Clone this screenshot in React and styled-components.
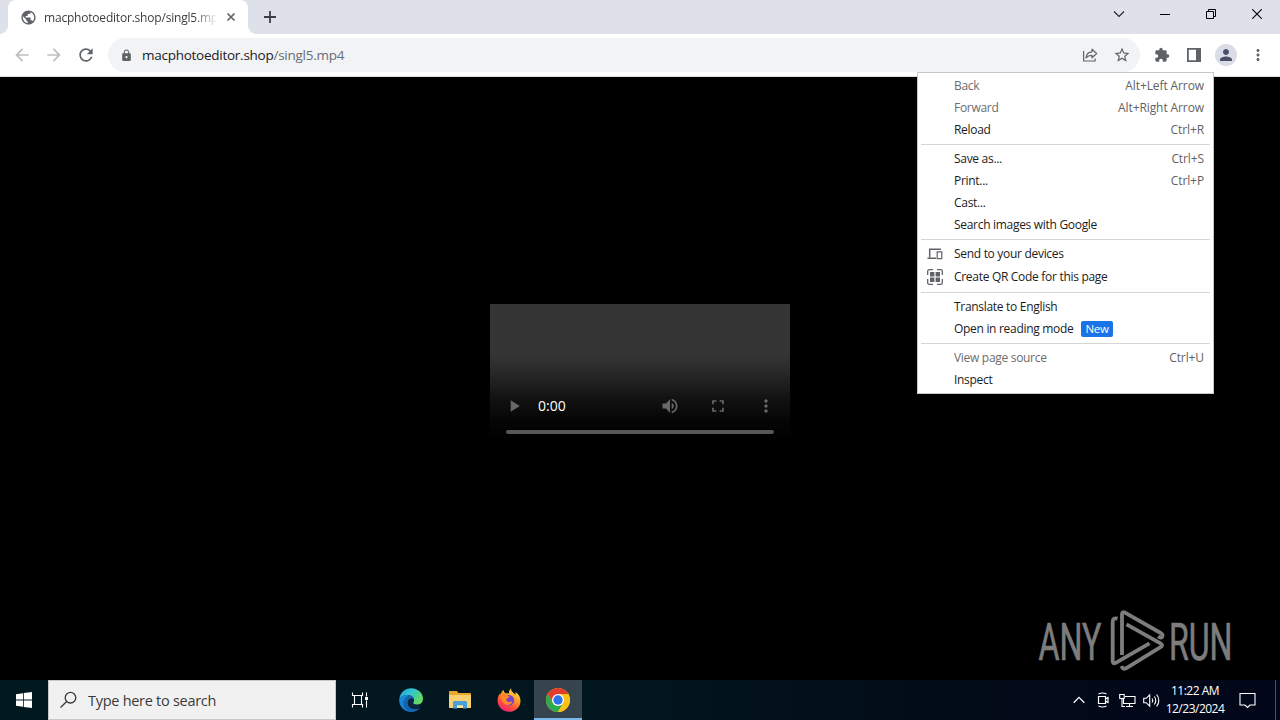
import styled, { createGlobalStyle, css } from 'styled-components';
import {
  MdArrowBack,
  MdArrowForward,
  MdExtension,
  MdFullscreen,
  MdLock,
  MdMoreVert,
  MdPerson,
  MdPlayArrow,
  MdPublic,
  MdRefresh,
  MdStarBorder,
  MdVolumeUp,
} from 'react-icons/md';

const GlobalStyle = createGlobalStyle`
  * {
    box-sizing: border-box;
  }

  body {
    margin: 0;
    overflow: hidden;
    background: #000;
    font-family: 'Open Sans', 'Noto Sans', sans-serif;
  }

  svg {
    display: block;
    flex: none;
  }
`;

const Desktop = styled.div`
  position: relative;
  display: flex;
  flex-direction: column;
  width: 1280px;
  height: 720px;
  overflow: hidden;
`;

const TabStrip = styled.div`
  display: flex;
  height: 34px;
  padding-left: 8px;
  background: #dee1e9;
`;

const Tab = styled.div`
  position: relative;
  display: flex;
  align-items: center;
  width: 240px;
  padding: 0 8px 0 12px;
  background: #fff;
  border-radius: 8px 8px 0 0;
  color: #5f6368;

  &::before,
  &::after {
    content: '';
    position: absolute;
    bottom: 0;
    width: 8px;
    height: 8px;
  }

  &::before {
    left: -8px;
    background: radial-gradient(circle at 0 0, transparent 7.5px, #fff 8px);
  }

  &::after {
    right: -8px;
    background: radial-gradient(circle at 100% 0, transparent 7.5px, #fff 8px);
  }
`;

const TabTitle = styled.div`
  width: 172px;
  margin: 0 8px 0 7px;
  overflow: hidden;
  color: #3c4043;
  font-size: 12px;
  letter-spacing: -0.2px;
  white-space: nowrap;
  mask-image: linear-gradient(90deg, #000 150px, transparent 174px);
`;

const IconCell = styled.div`
  display: flex;
  align-items: center;
  justify-content: center;
  flex: none;
  width: ${({ $width = 32 }) => $width}px;
  color: ${({ $color = '#5f6368' }) => $color};
`;

const WindowButtons = styled.div`
  display: flex;
  height: 28px;
  margin-left: auto;
`;

const Toolbar = styled.div`
  display: flex;
  align-items: stretch;
  height: 43px;
  padding: 0 6px;
  background: #fff;
  border-bottom: 1px solid #dcdee0;
`;

const AddressBar = styled.div`
  display: flex;
  align-items: center;
  width: 1032px;
  height: 34px;
  margin: 4px 6px 0 6px;
  padding: 0 2px 0 10px;
  background: #f1f3f4;
  border-radius: 17px;
`;

const Url = styled.div`
  flex: 1;
  padding: 0 0 1px 8px;
  color: #6a6e73;
  font-size: 13.5px;
  letter-spacing: -0.26px;
  white-space: nowrap;

  b {
    color: #202124;
    font-weight: 400;
  }
`;

const Avatar = styled.div`
  display: flex;
  align-items: center;
  justify-content: center;
  width: 22px;
  height: 22px;
  border-radius: 50%;
  background: #dadce8;
  color: #4a5068;
`;

const Page = styled.main`
  display: flex;
  align-items: center;
  justify-content: center;
  flex: 1;
  background: #000;
`;

const Video = styled.div`
  display: flex;
  flex-direction: column;
  justify-content: flex-end;
  width: 300px;
  height: 150px;
  margin-bottom: -1px;
  padding: 0 0 20px;
  background: linear-gradient(#353535 0, #353535 46px, #303030 58px, #222 76px, #111 96px, #060606 116px, #000 136px);
`;

const Controls = styled.div`
  display: flex;
  align-items: center;
  height: 32px;
  margin-bottom: 8px;
  color: #686868;
`;

const Time = styled.div`
  flex: 1;
  padding-bottom: 2px;
  color: #fff;
  font-size: 14px;
`;

const Timeline = styled.div`
  height: 4px;
  margin: 0 16px;
  border-radius: 2px;
  background: #575757;
`;

const Menu = styled.div`
  position: absolute;
  top: 72px;
  left: 917px;
  width: 297px;
  padding: 2px 0;
  background: #fff;
  border: 1px solid #c6c6c6;
`;

const Item = styled.div`
  display: flex;
  align-items: center;
  height: ${({ $tall }) => ($tall ? 24 : 22)}px;
  padding: 0 9px 2px 0;
  color: ${({ $disabled }) => ($disabled ? '#6d6d6d' : '#1c1c1c')};
  font-size: 12px;
  letter-spacing: -0.3px;
  white-space: nowrap;
`;

const ItemIcon = styled.div`
  display: flex;
  justify-content: center;
  width: 36px;
  padding: 2px 2px 0 0;
  color: #5f6368;
`;

const Shortcut = styled.span`
  margin-left: auto;
  color: #626262;
  letter-spacing: -0.1px;
`;

const Badge = styled.span`
  height: 16px;
  margin: 2px 0 0 8px;
  padding: 0 4px;
  border-radius: 2px;
  background: #1a73e8;
  color: #fff;
  font-size: 11.5px;
  line-height: 15px;
`;

const Separator = styled.div`
  height: 1px;
  margin: 3px;
  background: #d5d5d5;
`;

const Watermark = styled.div`
  position: absolute;
  top: 604px;
  left: 1030px;
`;

const Taskbar = styled.footer`
  display: flex;
  height: 40px;
  background: linear-gradient(90deg, #021821 0, #02161f 600px, #020b18 950px, #02061a 1280px);
`;

const Search = styled.div`
  display: flex;
  align-items: center;
  width: 288px;
  padding-left: 10px;
  background: #f1f1f1;
  border: 1px solid #c3c8ca;
  color: #3a3a3a;
  font-size: 14.5px;
  letter-spacing: -0.28px;

  span {
    margin-left: 10px;
  }
`;

const TaskButton = styled.div`
  display: flex;
  align-items: center;
  justify-content: center;
  width: 48px;
  ${({ $active }) =>
    $active &&
    css`
      background: #36454d;
      border-bottom: 2px solid #76b9ed;
      padding-top: 2px;
    `}
`;

const PinnedApps = styled.div`
  display: flex;
  gap: 1px;
  margin-left: 3px;
`;

const Tray = styled.div`
  display: flex;
  margin-left: auto;
  color: #fff;
`;

const Clock = styled.div`
  display: flex;
  flex-direction: column;
  align-items: center;
  width: 64px;
  padding-top: 2px;
  font-size: 12px;
  line-height: 18px;
  letter-spacing: -0.5px;
  white-space: nowrap;
`;

const ShowDesktop = styled.div`
  width: 5px;
  border-left: 1px solid #4a5361;
`;

const Line = styled.svg`
  fill: none;
  stroke: currentColor;
  stroke-width: ${({ $stroke = 1 }) => $stroke};
`;

const SendIcon = () => (
  <Line width="16" height="12" viewBox="0 0 16 12" $stroke={1.5}>
    <path d="M14 1.200H2.700v8M0.500 10.200h8.500" />
    <path d="M10.200 3.800h4.600v6.900h-4.600z" strokeWidth="1.2" />
  </Line>
);

const QrIcon = () => (
  <Line width="16" height="16" viewBox="0 0 16 16" $stroke={1.3}>
    <path d="M.7 6V2.300Q.7.7 2.300.7H6M10 .7h3.700q1.600 0 1.600 1.600V6M15.300 10v3.700q0 1.600-1.600 1.600H10M6 15.300H2.300Q.7 15.300.7 13.700V10" />
    <path
      d="M3 3h4.400v4.400H3zM8.600 3H13v4.400H8.600zM3 8.600h4.400V13H3zM8.600 8.600H13V13H8.600z"
      fill="currentColor"
      stroke="none"
    />
  </Line>
);

const EdgeIcon = () => (
  <svg width="24" height="24" viewBox="0 0 24 24">
    <defs>
      <linearGradient id="edgeTop" x1="0" y1="0" x2="1" y2=".5">
        <stop offset="0" stopColor="#249fe0" />
        <stop offset=".5" stopColor="#2fc5cf" />
        <stop offset="1" stopColor="#67d860" />
      </linearGradient>
      <linearGradient id="edgeBase" x1="0" y1="0" x2="1" y2="1">
        <stop offset="0" stopColor="#1a91df" />
        <stop offset="1" stopColor="#1461b3" />
      </linearGradient>
    </defs>
    <path d="M.3 11C1 4.600 6 .2 12.200.2 19.300.2 24 5.300 24 10.700c0 3.800-2.700 6-6 6-2.500 0-4-.9-4-1.700 0-.6 1-1 1-3 0-2.600-2.500-5-6.300-5C4.700 7 1.500 9 .3 11z" fill="url(#edgeTop)" />
    <path d="M.2 11.600C1.500 8.600 4.700 7 8.300 7.100c3.600.1 6.500 2.200 6.700 4.600-.5-.8-1.500-1.200-2.600-1.200-2.300 0-3.700 2-3.700 4.300 0 3.800 3.600 6.400 7.800 6.200 1.900-.1 3.800-.8 5-1.700-2 3-5.600 4.700-9.400 4.700C5 24-.2 18.200.2 11.600z" fill="url(#edgeBase)" />
    <path d="M4.500 15c0-4 2.600-7.200 6.300-7.500 2.300.4 4 2.200 4.200 4.200-.5-.8-1.500-1.200-2.600-1.200-2.300 0-3.700 2-3.700 4.300 0 3.800 3.600 6.400 7.800 6.200-1.500 1.300-3 1.900-5 1.800-4-.3-7-3.800-7-7.800z" fill="#135aa0" opacity=".7" />
    <path d="M12.400 10.500c1.500 0 2.700.9 2.600 2-.1 1.200-1 1.800-1 2.500 0 .8 1.500 1.700 4 1.700 1.300 0 2.500-.3 3.500-.9l.2.900c0 2-1.900 3.900-5.200 4.300-4.200.2-7.800-2.400-7.800-6.200 0-2.300 1.400-4.300 3.700-4.300z" fill="#0a2540" />
  </svg>
);

const FolderIcon = () => (
  <svg width="22" height="20" viewBox="0 0 22 20">
    <path d="M0 1.500Q0 1 .8 1h7l1.700 2H21q1 0 1 1v14H0z" fill="#eaa82f" />
    <path d="M0 5h22v12.500q0 .5-.6.5H.6Q0 18 0 17.500z" fill="#f9d173" />
    <path d="M4 18.500V12.500q0-1.500 1.500-1.500h11q1.500 0 1.500 1.500v6h-4V15.500H8v3z" fill="#4a9fd8" />
    <path d="M8 15.500h6V18H8z" fill="#f7e5a8" />
  </svg>
);

const FirefoxIcon = () => (
  <svg width="24" height="24" viewBox="0 0 24 24">
    <defs>
      <linearGradient id="fox" x1=".8" y1="0" x2=".25" y2="1">
        <stop offset="0" stopColor="#fff04a" />
        <stop offset=".4" stopColor="#ff9a22" />
        <stop offset=".7" stopColor="#ff4b3c" />
        <stop offset="1" stopColor="#e9207c" />
      </linearGradient>
    </defs>
    <path d="M14.300.2c-.5 2 .3 3 1.800 4.200 1 .8 1.800 1.500 2.300 2.300.4-1 .2-2-.2-3 3.300 1.900 5.500 5.500 5.300 9.500-.2 6-5 10.600-11.300 10.600S.8 19 .6 13c-.1-3 .8-5.700 2.600-7.700 0 .6.2 1.100.4 1.500C4 4.800 5 3 6.600 1.800c0 1.500.6 2.800 1.900 3.500 1.300-.2 2.500 0 3.500.3C11.700 3.500 12.500 1.500 14.300.2z" fill="url(#fox)" />
    <circle cx="12" cy="12.300" r="5.200" fill="#7542d2" />
    <path d="M3.500 7c1.500-1.800 4-2.200 5.500-1 .3 1.200 1.400 2 3.600 2.200-.2 1.300-2 1.700-2.900 2.600-.8.900-.2 2.900 1.800 3.200 1.800.3 2.500-1 4-.5-1.300 3.300-5.200 4.300-7.900 2.500C5 14.200 4.500 10 3.500 7z" fill="#ff8a25" />
  </svg>
);

const ChromeIcon = () => (
  <svg width="24" height="24" viewBox="0 0 24 24">
    <circle cx="12" cy="12" r="12" fill="#fbc116" />
    <path d="M12 6h10.390A12 12 0 0 0 1.610 6L7 15z" fill="#e33b2e" />
    <path d="M1.610 6A12 12 0 0 0 12 24l5.200-9L12 17.500 6.800 15z" fill="#2da94f" />
    <path d="M12 6h10.390A12 12 0 0 1 12 24l5.200-9z" fill="#fbc116" />
    <circle cx="12" cy="12" r="6" fill="#fff" />
    <circle cx="12" cy="12" r="4.700" fill="#2c74e8" />
  </svg>
);

const menuItems = [
  { label: 'Back', shortcut: 'Alt+Left Arrow', disabled: true },
  { label: 'Forward', shortcut: 'Alt+Right Arrow', disabled: true },
  { label: 'Reload', shortcut: 'Ctrl+R' },
  null,
  { label: 'Save as...', shortcut: 'Ctrl+S' },
  { label: 'Print...', shortcut: 'Ctrl+P' },
  { label: 'Cast...' },
  { label: 'Search images with Google' },
  null,
  { label: 'Send to your devices', icon: <SendIcon /> },
  { label: 'Create QR Code for this page', icon: <QrIcon />, tall: true },
  null,
  { label: 'Translate to English' },
  { label: 'Open in reading mode', badge: 'New' },
  null,
  { label: 'View page source', shortcut: 'Ctrl+U', disabled: true },
  { label: 'Inspect' },
];

const ContextMenu = () => (
  <Menu>
    {menuItems.map((item, index) =>
      item ? (
        <Item key={item.label} $disabled={item.disabled} $tall={item.tall}>
          <ItemIcon>{item.icon}</ItemIcon>
          {item.label}
          {item.badge && <Badge>{item.badge}</Badge>}
          {item.shortcut && <Shortcut>{item.shortcut}</Shortcut>}
        </Item>
      ) : (
        <Separator key={`separator_${index}`} />
      ),
    )}
  </Menu>
);

const BrowserTabs = () => (
  <TabStrip>
    <Tab>
      <MdPublic size={17} />
      <TabTitle>macphotoeditor.shop/singl5.mp4</TabTitle>
      <Line width="14" height="14" viewBox="0 0 14 14" $stroke={1.7}>
        <path d="M3.500 3.500l7 7M10.500 3.500l-7 7" />
      </Line>
    </Tab>
    <IconCell $width={44} $color="#3c4043">
      <Line width="12" height="12" viewBox="0 0 12 12" $stroke={1.8}>
        <path d="M6 0v12M0 6h12" />
      </Line>
    </IconCell>
    <WindowButtons>
      <IconCell $width={46} $color="#222">
        <Line width="12" height="8" viewBox="0 0 12 8" $stroke={1.1}>
          <path d="M1 1.500l5 5 5-5" />
        </Line>
      </IconCell>
      <IconCell $width={46} $color="#000">
        <Line width="10" height="11" viewBox="0 0 10 11">
          <path d="M0 5.500h10" />
        </Line>
      </IconCell>
      <IconCell $width={46} $color="#000">
        <Line width="10" height="10" viewBox="0 0 10 10">
          <path d="M.5 2.500h7v7h-7zM2.500 2.500v-2h7v7h-2" />
        </Line>
      </IconCell>
      <IconCell $width={46} $color="#000">
        <Line width="10" height="10" viewBox="0 0 10 10" $stroke={1.1}>
          <path d="M.2.2l9.600 9.600M9.800.2L.2 9.800" />
        </Line>
      </IconCell>
    </WindowButtons>
  </TabStrip>
);

const BrowserToolbar = () => (
  <Toolbar>
    <IconCell $color="#bcbec1">
      <MdArrowBack size={20} />
    </IconCell>
    <IconCell $color="#bcbec1">
      <MdArrowForward size={20} />
    </IconCell>
    <IconCell>
      <MdRefresh size={20} />
    </IconCell>
    <AddressBar>
      <IconCell $width={16}>
        <MdLock size={13} />
      </IconCell>
      <Url>
        <b>macphotoeditor.shop</b>/singl5.mp4
      </Url>
      <IconCell>
        <Line width="16" height="16" viewBox="0 0 16 16" $stroke={1.2}>
          <path d="M1.600 4v10h11.500v-2.500" />
          <path d="M4 11c.4-4 2.500-6 6-6.200V2.200l4.600 4.300L10 10.800V8.300C7.300 8.300 5.500 9 4 11z" strokeLinejoin="round" />
        </Line>
      </IconCell>
      <IconCell>
        <MdStarBorder size={18} />
      </IconCell>
    </AddressBar>
    <IconCell>
      <MdExtension size={16} />
    </IconCell>
    <IconCell>
      <Line width="14" height="14" viewBox="0 0 14 14" $stroke={1.8}>
        <path d="M.9.9h12.200v12.200H.9z" />
        <path d="M9 1h4v12H9z" fill="currentColor" stroke="none" />
      </Line>
    </IconCell>
    <IconCell>
      <Avatar>
        <MdPerson size={18} />
      </Avatar>
    </IconCell>
    <IconCell>
      <MdMoreVert size={18} />
    </IconCell>
  </Toolbar>
);

const VideoPlayer = () => (
  <Video>
    <Controls>
      <IconCell $width={48} $color="inherit">
        <MdPlayArrow size={20} />
      </IconCell>
      <Time>0:00</Time>
      <IconCell $width={48} $color="inherit">
        <MdVolumeUp size={20} />
      </IconCell>
      <IconCell $width={48} $color="inherit">
        <MdFullscreen size={20} />
      </IconCell>
      <IconCell $width={48} $color="inherit">
        <MdMoreVert size={20} />
      </IconCell>
    </Controls>
    <Timeline />
  </Video>
);

const AnyRunLogo = () => (
  <Watermark>
    <svg width="220" height="74" viewBox="0 0 220 74" fill="#7d7d7d">
      <g fontFamily="Roboto, sans-serif" fontSize="52.500" stroke="#7d7d7d" strokeWidth=".7">
        <text x="8.500" y="55.500" textLength="63" lengthAdjust="spacingAndGlyphs">
          ANY
        </text>
        <text x="139" y="55.500" textLength="63.500" lengthAdjust="spacingAndGlyphs">
          RUN
        </text>
      </g>
      <g fill="none" stroke="#7d7d7d" strokeWidth="3.800" strokeLinejoin="round">
        <path d="M92 51V10.500q0-3.500 3-1.800L130.700 29q2.800 1.800 1.500 3.700-1.300 1.600-4.200-.2" />
        <path d="M87.500 14.700q-4.800-1.300-4.800 3.300v39q0 3.500 3 1.800L119.500 39.300" />
        <path d="M96.500 20.300L130.500 39.300q3.200 1.900 0 3.800L96 64.300q-3.300 1.600-4.300-2.300" />
      </g>
    </svg>
  </Watermark>
);

const WindowsTaskbar = () => (
  <Taskbar>
    <TaskButton>
      <svg width="16" height="16" viewBox="0 0 16 16" fill="#fff">
        <path d="M0 2.200L7 1.300v6.200H0zM7.800 1.100L16 0v7.500H7.800zM0 8.400h7v6.300L0 13.800zM7.800 8.400H16V16l-8.200-1.100z" />
      </svg>
    </TaskButton>
    <Search>
      <Line width="19" height="18" viewBox="0 0 19 18" $stroke={1.3}>
        <circle cx="11.500" cy="6.700" r="5.300" />
        <path d="M7.700 10.500L1.500 16.500" />
      </Line>
      <span>Type here to search</span>
    </Search>
    <IconCell $width={48} $color="#fff">
      <Line width="18" height="18" viewBox="0 0 18 18" $stroke={1.1}>
        <path d="M1.500 1.500v3h10v-3M1.500 16.500v-3h10v3M3.500 4.500v9M10.500 4.500v9M15.500 1.500v4M15.500 9.500v7" />
        <path d="M14 6h3v3h-3z" fill="currentColor" stroke="none" />
      </Line>
    </IconCell>
    <PinnedApps>
      <TaskButton>
        <EdgeIcon />
      </TaskButton>
      <TaskButton>
        <FolderIcon />
      </TaskButton>
      <TaskButton>
        <FirefoxIcon />
      </TaskButton>
      <TaskButton $active>
        <ChromeIcon />
      </TaskButton>
    </PinnedApps>
    <Tray>
      <IconCell $width={24} $color="#fff">
        <Line width="12" height="8" viewBox="0 0 12 8" $stroke={1.3}>
          <path d="M.7 6.700L6 1.400l5.300 5.300" />
        </Line>
      </IconCell>
      <IconCell $width={24} $color="#fff">
        <Line width="14" height="16" viewBox="0 0 14 16" $stroke={1.2}>
          <path d="M2.500 4.500h7v7h-7zM9.500 7l2.500-1.500v5L9.500 9M2.500 2q4-2 8 0M2.500 14q4 2 8 0" />
        </Line>
      </IconCell>
      <IconCell $width={24} $color="#fff">
        <Line width="17" height="15" viewBox="0 0 17 15" $stroke={1.1}>
          <path d="M6 3.500h10v7H4.500V6M10.500 10.500v3M7 13.500h7M.7 1.500h4.500v4H.7zM3 5.500v8h3" />
        </Line>
      </IconCell>
      <IconCell $width={24} $color="#fff">
        <Line width="17" height="15" viewBox="0 0 17 15" $stroke={1.1}>
          <path d="M.7 5.300h2.500l3.500-3.500v11.400L3.200 9.700H.7zM9 5.500q1.500 2 0 4M11.300 3.500q3 4 0 8M13.600 1.500q4.500 6 0 12" />
        </Line>
      </IconCell>
      <Clock>
        <span>11:22 AM</span>
        <span>12/23/2024</span>
      </Clock>
      <IconCell $width={40} $color="#fff">
        <Line width="17" height="17" viewBox="0 0 17 17" $stroke={1.1}>
          <path d="M1 1.500h15v11.500h-5L8.500 15.500 6 13H1z" />
        </Line>
      </IconCell>
      <IconCell $width={8} />
      <ShowDesktop />
    </Tray>
  </Taskbar>
);

const App = () => (
  <>
    <GlobalStyle />
    <Desktop>
      <BrowserTabs />
      <BrowserToolbar />
      <Page>
        <VideoPlayer />
      </Page>
      <WindowsTaskbar />
      <AnyRunLogo />
      <ContextMenu />
    </Desktop>
  </>
);

export default App;
